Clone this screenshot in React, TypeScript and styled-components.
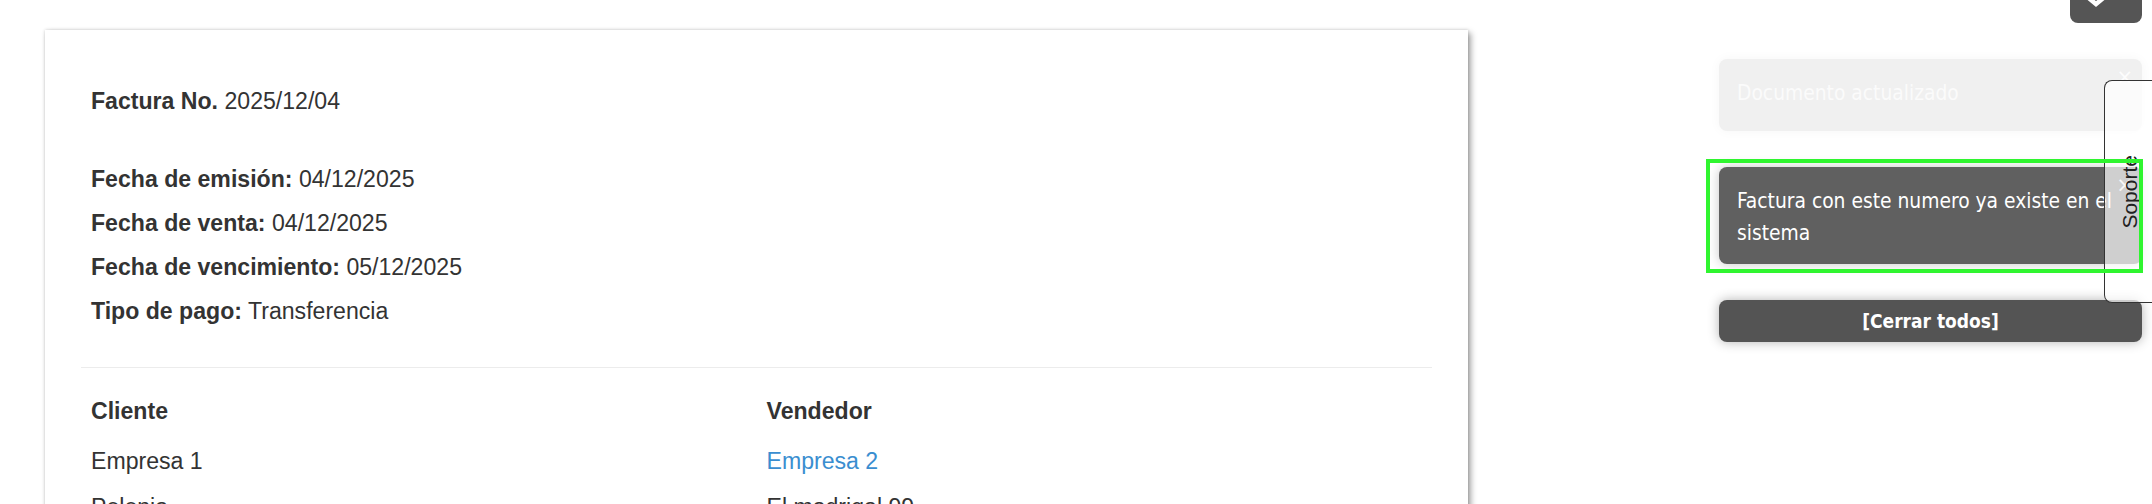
import styled, { createGlobalStyle } from "styled-components";

const GlobalStyle = createGlobalStyle`
  html, body {
    margin: 0;
    height: 504px;
    overflow: hidden;
    background: #fff;
  }
  body {
    position: relative;
    font-family: "Liberation Sans", Arial, sans-serif;
    color: #333;
  }
`;

const dates = [
  { label: "Fecha de emisión:", value: "04/12/2025" },
  { label: "Fecha de venta:", value: "04/12/2025" },
  { label: "Fecha de vencimiento:", value: "05/12/2025" },
  { label: "Tipo de pago:", value: "Transferencia" },
];

const App = () => {
  return (
    <>
      <GlobalStyle />
      <Page>
        <InvoiceCard>
          <Header>
            <Line>
              <Label>Factura No.</Label> 2025/12/04
            </Line>
          </Header>
          <Dates>
            {dates.map((d) => (
              <Line key={d.label}>
                <Label>{d.label}</Label> {d.value}
              </Line>
            ))}
          </Dates>
          <Divider />
          <Parties>
            <Party>
              <PartyTitle>Cliente</PartyTitle>
              <PartyLine>Empresa 1</PartyLine>
              <PartyLine>Polonia</PartyLine>
            </Party>
            <Party>
              <PartyTitle>Vendedor</PartyTitle>
              <PartyLine>
                <CompanyLink href="#">Empresa 2</CompanyLink>
              </PartyLine>
              <PartyLine>El madrigal 99</PartyLine>
            </Party>
          </Parties>
        </InvoiceCard>
      </Page>

      <ScrollButton type="button">
        <svg width="28" height="16" viewBox="0 0 28 16">
          <path d="M3 3 L14 12 L25 3" fill="none" stroke="#fff" strokeWidth="4.5" />
        </svg>
      </ScrollButton>

      <ToastContainer>
        <Toast $fading>
          <CloseButton $fading>×</CloseButton>
          Documento actualizado
        </Toast>
        <Toast $highlight>
          <CloseButton>×</CloseButton>
          Factura con este numero ya existe en el sistema
        </Toast>
        <CloseAll type="button">[Cerrar todos]</CloseAll>
      </ToastContainer>

      <SupportTab>
        <SupportLabel>Soporte</SupportLabel>
      </SupportTab>
    </>
  );
};

const Page = styled.div`
  padding: 30px 0 0 45px;
`;

const InvoiceCard = styled.div`
  width: 1423px;
  box-sizing: border-box;
  padding: 49px 36px 60px;
  background: #fff;
  box-shadow: 0 0 3px rgba(0, 0, 0, 0.18), 3px 3px 6px rgba(0, 0, 0, 0.35);
  font-size: 23.1px;
`;

const Header = styled.div`
  margin-bottom: 34px;
`;

const Dates = styled.div`
  margin-bottom: 34px;
`;

const Line = styled.div`
  padding: 0 10px;
  line-height: 44px;
  white-space: nowrap;
`;

const Label = styled.b`
  font-weight: 700;
`;

const Divider = styled.div`
  height: 1px;
  background: #ececec;
`;

const Parties = styled.div`
  display: grid;
  grid-template-columns: 1fr 1fr;
  padding-top: 21px;
`;

const Party = styled.div`
  padding: 0 10px;
`;

const PartyTitle = styled.div`
  font-weight: 700;
  line-height: 44px;
  margin-bottom: 6px;
`;

const PartyLine = styled.div`
  line-height: 44px;
  margin-bottom: 2px;
`;

const CompanyLink = styled.a`
  color: #3a8ed0;
  text-decoration: none;
`;

const ScrollButton = styled.button`
  position: absolute;
  top: -37px;
  right: 10px;
  width: 72px;
  height: 60px;
  display: flex;
  align-items: flex-end;
  justify-content: flex-start;
  padding: 0 0 15px 12px;
  box-sizing: border-box;
  border: none;
  border-radius: 8px;
  background: #555;
`;

const ToastContainer = styled.div`
  position: absolute;
  top: 59px;
  right: 10px;
  width: 423px;
  font-family: "DejaVu Sans Condensed", "DejaVu Sans", Verdana, sans-serif;
  font-stretch: semi-condensed;
`;

const Toast = styled.div<{ $fading?: boolean; $highlight?: boolean }>`
  position: relative;
  box-sizing: border-box;
  margin-bottom: 36px;
  padding: 18px 6px ${(p) => (p.$fading ? "22px" : "15px")} 18px;
  border-radius: 8px;
  font-size: 20.8px;
  line-height: 32px;
  color: ${(p) => (p.$fading ? "#fbfbfb" : "#fff")};
  background: ${(p) => (p.$fading ? "#f0f0f0" : "#606060")};
  box-shadow: 0 0 12px
    ${(p) => (p.$fading ? "rgba(0, 0, 0, 0.04)" : "rgba(0, 0, 0, 0.22)")};

  ${(p) =>
    p.$highlight &&
    `
    &::after {
      content: "";
      position: absolute;
      top: -8px;
      bottom: -9px;
      left: -13px;
      right: -1px;
      border: 4px solid #2ff52f;
      z-index: 30;
      pointer-events: none;
    }
  `}
`;

const CloseButton = styled.span<{ $fading?: boolean }>`
  position: absolute;
  top: 2px;
  right: 9px;
  font-family: "DejaVu Sans", sans-serif;
  font-size: 22px;
  line-height: 32px;
  color: #fff;
  opacity: ${(p) => (p.$fading ? 0.9 : 0.85)};
`;

const CloseAll = styled.button`
  display: block;
  width: 100%;
  height: 42px;
  border: none;
  border-radius: 8px;
  background: #545454;
  color: #fff;
  font-family: inherit;
  font-stretch: semi-condensed;
  font-weight: 700;
  font-size: 19px;
  box-shadow: 0 0 12px rgba(0, 0, 0, 0.3);
`;

const SupportTab = styled.div`
  position: absolute;
  top: 80px;
  right: -12px;
  width: 60px;
  height: 223px;
  box-sizing: border-box;
  display: flex;
  align-items: center;
  padding-left: 13px;
  border: 1px solid #333;
  border-right: none;
  border-radius: 8px 0 0 8px;
  background: rgba(255, 255, 255, 0.7);
  z-index: 20;
`;

const SupportLabel = styled.span`
  writing-mode: vertical-rl;
  transform: rotate(180deg);
  font-family: "Liberation Sans", Arial, sans-serif;
  font-size: 21px;
  color: #222;
`;

export default App;
